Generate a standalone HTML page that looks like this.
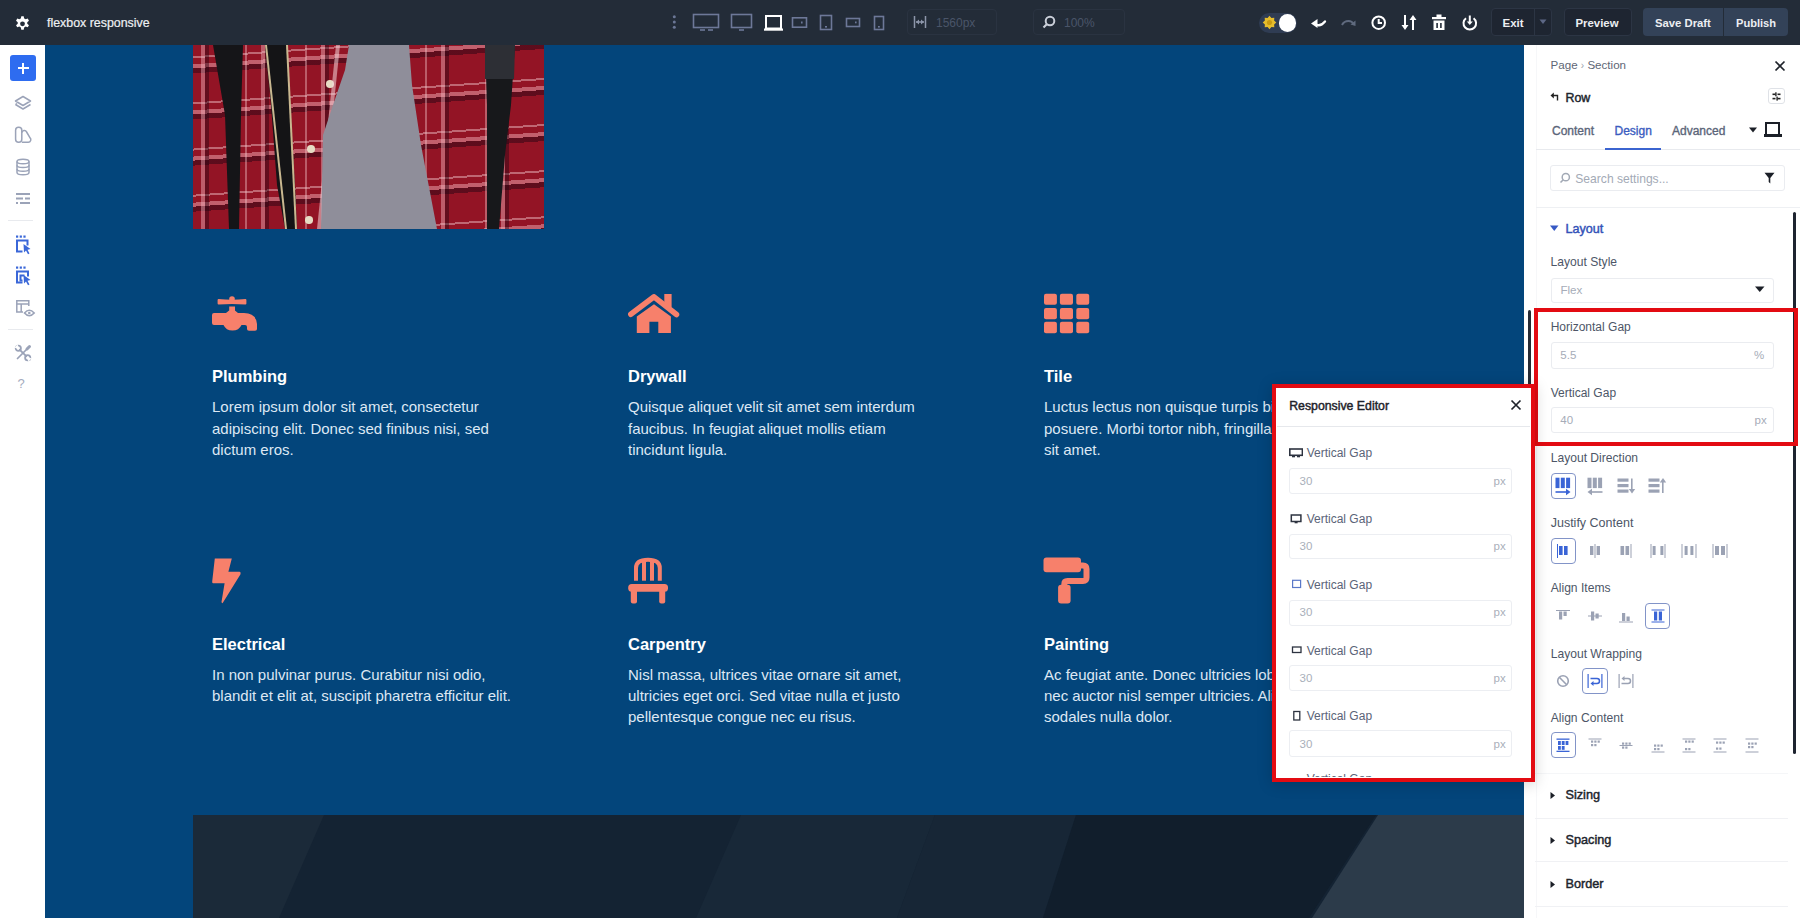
<!DOCTYPE html>
<html><head><meta charset="utf-8">
<style>
*{box-sizing:border-box;margin:0;padding:0}
html,body{width:1800px;height:918px;overflow:hidden;background:#fff}
body{position:relative;font-family:"Liberation Sans",sans-serif}
.a{position:absolute}
#top{left:0;top:0;width:1800px;height:45px;background:#232c38}
#side{left:0;top:45px;width:45px;height:873px;background:#fff}
#canvas{left:45px;top:45px;width:1479px;height:873px;background:#03457b;overflow:hidden}
#panel{left:1524px;top:45px;width:276px;height:873px;background:#fff}
.t{position:absolute;white-space:nowrap;line-height:1}
</style></head>
<body>
<div id="top" class="a">
</div>
<svg class="a" style="left:14px;top:15px" width="17" height="17" viewBox="0 0 24 24"><path fill="#fff" fill-rule="evenodd" d="M10.3 1h3.4l.6 3.1c.8.3 1.5.7 2.1 1.2l3-1 1.7 2.9-2.4 2.1c.1.8.1 1.5 0 2.3l2.4 2.1-1.7 2.9-3-1c-.6.5-1.3.9-2.1 1.2l-.6 3.1h-3.4l-.6-3.1c-.8-.3-1.5-.7-2.1-1.2l-3 1-1.7-2.9 2.4-2.1c-.1-.8-.1-1.5 0-2.3L2.9 7.2l1.7-2.9 3 1c.6-.5 1.3-.9 2.1-1.2zM12 8.3a3.4 3.4 0 1 0 0 6.8 3.4 3.4 0 0 0 0-6.8z" transform="translate(0,.8)"/></svg>
<div class="t" style="left:47px;top:16.6px;font-size:12.4px;color:#eef0f3;-webkit-text-stroke:0.2px #eef0f3">flexbox responsive</div>
<svg class="a" style="left:660px;top:0" width="240" height="45">
 <g fill="#6b7796"><circle cx="14.3" cy="16.8" r="1.5"/><circle cx="14.3" cy="22" r="1.5"/><circle cx="14.3" cy="27.3" r="1.5"/></g>
 <g fill="none" stroke="#6d7898" stroke-width="1.6">
  <rect x="33.5" y="14.5" width="25" height="13"/>
  <line x1="40" y1="30" x2="45" y2="30"/><line x1="48" y1="30" x2="53" y2="30"/>
  <rect x="71.5" y="14.5" width="20" height="13"/>
  <line x1="79" y1="30" x2="84" y2="30"/>
  <rect x="132.5" y="17.8" width="14" height="9.4"/>
  <rect x="160.5" y="15.5" width="11" height="14"/>
  <rect x="186.5" y="18.5" width="13" height="8"/>
  <rect x="214.5" y="16.5" width="9" height="13"/>
 </g>
 <g fill="#6d7898"><rect x="141" y="21.5" width="1.6" height="2"/><rect x="165" y="26" width="2" height="1.6"/><rect x="195" y="21.5" width="1.6" height="1.8"/><rect x="218" y="26" width="1.8" height="1.6"/></g>
 <g fill="none" stroke="#fff" stroke-width="2"><rect x="106" y="16" width="15" height="12.5"/></g>
 <rect x="104" y="28.5" width="19" height="2.2" fill="#fff"/>
</svg>
<div class="a" style="left:907px;top:9px;width:90px;height:26px;border:1px solid #2a3341;border-radius:4px"></div>
<svg class="a" style="left:912px;top:14px" width="16" height="16" viewBox="0 0 16 16"><g stroke="#8d96aa" stroke-width="1.5" fill="none"><line x1="2.5" y1="2" x2="2.5" y2="14"/><line x1="13.5" y1="2" x2="13.5" y2="14"/><line x1="4" y1="8" x2="12" y2="8"/></g><path d="M4 8l3-2.5v5zM12 8l-3-2.5v5z" fill="#8d96aa"/></svg>
<div class="t" style="left:936px;top:17px;font-size:12px;color:#4a5569">1560px</div>
<div class="a" style="left:1033px;top:9px;width:92px;height:26px;border:1px solid #2a3341;border-radius:4px"></div>
<svg class="a" style="left:1041px;top:14px" width="16" height="16" viewBox="0 0 16 16"><circle cx="9" cy="7" r="4.3" stroke="#c9ced8" stroke-width="2" fill="none"/><line x1="6" y1="10" x2="2.5" y2="13.5" stroke="#c9ced8" stroke-width="2.2"/></svg>
<div class="t" style="left:1064px;top:17px;font-size:12px;color:#4a5569">100%</div>
<div class="a" style="left:1259px;top:12.5px;width:38px;height:20px;border-radius:10px;background:#2f3c53"></div>
<svg class="a" style="left:1262.2px;top:15.2px" width="15" height="15" viewBox="0 0 15 15"><polygon points="14.30,7.50 12.12,9.41 12.31,12.31 9.41,12.12 7.50,14.30 5.59,12.12 2.69,12.31 2.88,9.41 0.70,7.50 2.88,5.59 2.69,2.69 5.59,2.88 7.50,0.70 9.41,2.88 12.31,2.69 12.12,5.59" fill="#e6bd2c"/><circle cx="7.5" cy="7.5" r="2.6" fill="#c99a12"/></svg>
<div class="a" style="left:1278.6px;top:14px;width:17.5px;height:17.5px;border-radius:50%;background:#fff"></div>
<svg class="a" style="left:1310px;top:14px" width="17" height="17" viewBox="0 0 17 17"><path d="M6 10.5 Q10.5 13 15 7.5" stroke="#fff" stroke-width="2.3" fill="none" stroke-linecap="round"/><path d="M1 9.5 L7.5 5 L7.5 14 Z" fill="#fff"/></svg>
<svg class="a" style="left:1340px;top:14px" width="17" height="17" viewBox="0 0 17 17"><path d="M2 11 Q4 7 8.5 7 Q12 7 13.5 10" stroke="#5f6a7e" stroke-width="2" fill="none"/><path d="M15.5 12 L15.5 6.5 L10.5 10.5 Z" fill="#5f6a7e"/></svg>
<svg class="a" style="left:1370px;top:14px" width="18" height="18" viewBox="0 0 18 18"><circle cx="8.7" cy="8.7" r="6.3" stroke="#fff" stroke-width="2" fill="none"/><path d="M8.7 5v4h3.3" stroke="#fff" stroke-width="2" fill="none"/></svg>
<svg class="a" style="left:1400px;top:13px" width="18" height="19" viewBox="0 0 18 19"><g stroke="#fff" stroke-width="2" fill="none"><line x1="5" y1="2" x2="5" y2="13"/><line x1="13" y1="6" x2="13" y2="17"/></g><path d="M1.5 12h7l-3.5 5z M9.5 7h7l-3.5-5z" fill="#fff"/></svg>
<svg class="a" style="left:1431px;top:13px" width="16" height="19" viewBox="0 0 16 19"><rect x="1" y="4" width="14" height="2.2" fill="#fff"/><rect x="5.5" y="1.5" width="5" height="2.5" fill="#fff"/><path d="M2.5 7.5h11v9.5h-11z" fill="#fff"/><rect x="5.3" y="10" width="1.6" height="5" fill="#232c38"/><rect x="9.1" y="10" width="1.6" height="5" fill="#232c38"/></svg>
<svg class="a" style="left:1461px;top:14px" width="18" height="18" viewBox="0 0 18 18"><path d="M5 4.2 A6.3 6.3 0 1 0 12.6 4.2" stroke="#fff" stroke-width="2" fill="none"/><line x1="8.8" y1="1.5" x2="8.8" y2="9" stroke="#fff" stroke-width="2"/><path d="M5.8 7.5h6l-3 3.5z" fill="#fff"/></svg>
<div class="a" style="left:1491px;top:8px;width:61px;height:28px;border:1px solid #2c3544;border-radius:4px;background:#1e2531"></div>
<div class="a" style="left:1534px;top:8px;width:1px;height:28px;background:#2c3544"></div>
<svg class="a" style="left:1539px;top:19px" width="8" height="6"><path d="M0.5 0.5h7l-3.5 4.5z" fill="#5c6785"/></svg>
<div class="t" style="left:1502.5px;top:18px;font-size:11.5px;font-weight:bold;color:#eceef2">Exit</div>
<div class="a" style="left:1564px;top:8px;width:68px;height:28px;border:1px solid #2c3544;border-radius:4px;background:#1e2531"></div>
<div class="t" style="left:1575.5px;top:18px;font-size:11.4px;font-weight:bold;color:#eceef2">Preview</div>
<div class="a" style="left:1643px;top:8px;width:80px;height:28px;border-radius:4px 0 0 4px;background:#334258"></div>
<div class="a" style="left:1724px;top:8px;width:64px;height:28px;border-radius:0 4px 4px 0;background:#334258"></div>
<div class="t" style="left:1655px;top:18px;font-size:11.3px;font-weight:bold;color:#eceef2">Save Draft</div>
<div class="t" style="left:1736px;top:18px;font-size:11.1px;font-weight:bold;color:#eceef2">Publish</div>

<div id="side" class="a">
</div>
<div class="a" style="left:10px;top:55px;width:26px;height:26px;border-radius:3px;background:#2e6cf0"></div>
<div class="a" style="left:17.5px;top:67px;width:11px;height:2px;background:#fff"></div>
<div class="a" style="left:22px;top:62.5px;width:2px;height:11px;background:#fff"></div>
<svg class="a" style="left:13px;top:94px" width="20" height="20" viewBox="0 0 20 20"><g fill="none" stroke="#9ba3b8" stroke-width="1.5" stroke-linejoin="round"><path d="M10 2.5 L17.5 7 L10 11.5 L2.5 7 Z"/><path d="M2.5 10.5 L10 15 L17.5 10.5"/><path d="M4 9.5 L2.5 10.5"/></g></svg>
<svg class="a" style="left:13px;top:125px" width="20" height="20" viewBox="0 0 20 20"><g fill="none" stroke="#9ba3b8" stroke-width="1.5" stroke-linejoin="round"><rect x="2.6" y="2.2" width="6.2" height="15" rx="3"/><path d="M8.8 17.2 H15.2 A2.6 2.6 0 0 0 16.9 12.6 L13.6 7 A2.5 2.5 0 0 0 8.8 7.8"/></g></svg>
<svg class="a" style="left:13px;top:157px" width="20" height="20" viewBox="0 0 20 20"><g fill="none" stroke="#9ba3b8" stroke-width="1.5"><ellipse cx="10" cy="4.5" rx="6" ry="2.3"/><path d="M4 4.5 V15.5 C4 17 7 17.8 10 17.8 C13 17.8 16 17 16 15.5 V4.5"/><path d="M4 8.3 C4 9.8 7 10.6 10 10.6 C13 10.6 16 9.8 16 8.3"/><path d="M4 12 C4 13.5 7 14.3 10 14.3 C13 14.3 16 13.5 16 12"/></g></svg>
<svg class="a" style="left:13px;top:189px" width="20" height="20" viewBox="0 0 20 20"><g fill="#9ba3b8"><rect x="3" y="4" width="14" height="2"/><rect x="3" y="8.5" width="7" height="2"/><rect x="12" y="8.5" width="5" height="2"/><rect x="3" y="13" width="2" height="2"/><rect x="7" y="13" width="10" height="2"/></g></svg>
<div class="a" style="left:8px;top:219.5px;width:25px;height:1px;background:#e8eaee"></div>
<svg class="a" style="left:13px;top:234px" width="20" height="21" viewBox="0 0 20 21"><g fill="#3a67d8"><rect x="3" y="1.5" width="2.2" height="2.2"/><rect x="6.7" y="1.5" width="2.2" height="2.2"/><rect x="10.4" y="1.5" width="2.2" height="2.2"/><path d="M3 5.5h12.5v6h-2v-4H5v9h4.5v2H3z"/><path d="M10.5 10 L17.5 15 L14.5 15.8 L16.5 19.5 L15 20.2 L13 16.6 L11 18.5 Z"/></g></svg>
<svg class="a" style="left:13px;top:265px" width="20" height="21" viewBox="0 0 20 21"><g fill="#3a67d8"><rect x="3" y="1.5" width="2.2" height="2.2"/><rect x="6.7" y="1.5" width="2.2" height="2.2"/><rect x="10.4" y="1.5" width="2.2" height="2.2"/><path d="M3 5.5h13v6h-2v-4H5v9h4.5v2H3z"/><path d="M6.5 9.5h5v2h-3v3h1v2h-3z"/><path d="M10.5 10 L17.5 15 L14.5 15.8 L16.5 19.5 L15 20.2 L13 16.6 L11 18.5 Z"/></g></svg>
<svg class="a" style="left:13px;top:297px" width="24" height="20" viewBox="0 0 24 20"><g fill="none" stroke="#9ba3b8" stroke-width="1.5"><path d="M10 15 H3.8 V3.7 H15.8 V9"/><line x1="3.8" y1="7" x2="15.8" y2="7"/><line x1="8.2" y1="7" x2="8.2" y2="15"/><path d="M11.5 16 Q16.3 10.5 21.2 16 Q16.3 21.5 11.5 16Z" stroke-width="1.6"/></g><circle cx="16.3" cy="16" r="1.3" fill="#9ba3b8"/></svg>
<div class="a" style="left:8px;top:329px;width:25px;height:1px;background:#e8eaee"></div>
<svg class="a" style="left:13px;top:343px" width="20" height="20" viewBox="0 0 20 20"><g fill="none" stroke="#9ba3b8" stroke-linecap="round"><path d="M14.5 5.5 L4.5 15.5" stroke-width="1.7"/><path d="M16.5 3.5 L14 6" stroke-width="3"/><path d="M6.8 6.8 L13.2 13.2" stroke-width="1.9"/><circle cx="5.3" cy="5.3" r="2.6" stroke-width="1.8"/><circle cx="14.7" cy="14.7" r="2.6" stroke-width="1.8"/></g><path d="M1.5 4.5 L4.5 1.5 L6 5 L5 6Z M18.5 15.5 L15.5 18.5 L14 15 L15 14Z" fill="#fff"/></svg>
<div class="t" style="left:17.5px;top:377px;font-size:13px;color:#a3abbe">?</div>

<div id="canvas" class="a">
</div>
<div class="a" style="left:193px;top:45px;width:351px;height:184px;overflow:hidden;background:#931425">
 <div class="a" style="left:-20px;top:-20px;width:400px;height:230px;transform:rotate(-4deg);background:
  repeating-linear-gradient(0deg, transparent 0 10px, rgba(40,5,20,.5) 10px 15px, rgba(240,170,180,.5) 15px 19px, transparent 19px 25px, rgba(245,205,210,.45) 25px 27px, transparent 27px 46px)"></div>
 <div class="a" style="left:0;top:0;width:351px;height:184px;background:
  repeating-linear-gradient(90deg, transparent 0 8px, rgba(240,180,190,.45) 8px 12px, rgba(40,5,20,.45) 12px 16px, transparent 16px 52px, rgba(245,200,205,.4) 52px 54px, transparent 54px 60px)"></div>
 <div class="a" style="left:133px;top:35px;width:7.5px;height:7.5px;border-radius:50%;background:#e6dcc4"></div>
 <div class="a" style="left:114px;top:100px;width:7.5px;height:7.5px;border-radius:50%;background:#e6dcc4"></div>
 <div class="a" style="left:112px;top:171px;width:7.5px;height:7.5px;border-radius:50%;background:#e6dcc4"></div>
 <div class="a" style="left:0;top:0;width:351px;height:184px;background:rgba(245,215,220,.55);clip-path:polygon(143px 0,147px 0,128px 184px,124px 184px)"></div>
 <div class="a" style="left:0;top:0;width:351px;height:184px;background:#8f8e9a;clip-path:polygon(156px 0,216px 0,219px 40px,228px 100px,244px 184px,128px 184px,130px 90px,140px 60px,152px 25px)"></div>
 <div class="a" style="left:0;top:0;width:351px;height:184px;background:#151518;clip-path:polygon(20px 0,50px 0,48px 70px,46px 184px,36px 184px,32px 70px)"></div>
 <div class="a" style="left:0;top:0;width:351px;height:184px;background:#141416;clip-path:polygon(72px 0,94px 0,97px 60px,102px 140px,104px 184px,92px 184px,84px 140px,78px 60px)"></div>
 <div class="a" style="left:0;top:0;width:351px;height:184px;background:#c9b890;clip-path:polygon(72px 0,74px 0,94px 184px,92px 184px)"></div>
 <div class="a" style="left:0;top:0;width:351px;height:184px;background:#c9b890;clip-path:polygon(93px 0,95px 0,104px 184px,102px 184px)"></div>
 <div class="a" style="left:0;top:0;width:351px;height:184px;background:#17181b;clip-path:polygon(292px 0,322px 0,318px 60px,312px 110px,306px 184px,294px 184px,294px 60px)"></div>
 <div class="a" style="left:0;top:0;width:351px;height:184px;background:#2d2f35;clip-path:polygon(292px 0,322px 0,321px 34px,292px 34px)"></div>
</div>
<svg class="a" style="left:212px;top:296px" width="46" height="36" viewBox="0 0 46 36" fill="#f7806b">
 <path d="M5.6 4 Q5.6 3 6.6 3 Q20 4.6 33.4 3 Q34.4 3 34.4 4 L34.4 7.6 Q34.4 8.6 33.4 8.6 Q20 7.2 6.6 8.6 Q5.6 8.6 5.6 7.6 Z"/>
 <circle cx="20" cy="3" r="2.8"/>
 <rect x="17.2" y="10.5" width="5.8" height="6"/>
 <path d="M0 19 Q0 17 2 17 L14 17 Q16.5 14 20 14 Q23.5 14 26 17 L32 17 Q44 17 45 28 L45 33 Q45 34.8 43 34.8 L37 34.8 Q35 34.8 35 33 L35 31 Q35 29 33 29 L29.5 29 Q27 34.5 20.5 34.5 Q14 34.5 11.5 29 L2 29 Q0 29 0 27 Z"/>
</svg>
<svg class="a" style="left:628px;top:294px" width="52" height="40" viewBox="0 0 52 40" fill="#f7806b">
 <rect x="36.3" y="0" width="7.3" height="13"/>
 <path d="M2.8 20.3 L26 2.8 L48.5 20.5" fill="none" stroke="#f7806b" stroke-width="5.5" stroke-linecap="round" stroke-linejoin="round"/>
 <path d="M8.8 22.6 L26 10.2 L42.9 22.6 V39 H30.3 V27.8 H21.4 V39 H8.8 Z"/>
</svg>
<svg class="a" style="left:1043px;top:293px" width="48" height="42" viewBox="0 0 48 42" fill="#f7806b">
 <rect x="1" y="0.7" width="12.9" height="11.1" rx="2"/><rect x="16.9" y="0.7" width="13.1" height="11.1" rx="2"/><rect x="33.3" y="0.7" width="12.9" height="11.1" rx="2"/>
 <rect x="1" y="15" width="12.9" height="11.2" rx="2"/><rect x="16.9" y="15" width="13.1" height="11.2" rx="2"/><rect x="33.3" y="15" width="12.9" height="11.2" rx="2"/>
 <rect x="1" y="28.8" width="12.9" height="11.4" rx="2"/><rect x="16.9" y="28.8" width="13.1" height="11.4" rx="2"/><rect x="33.3" y="28.8" width="12.9" height="11.4" rx="2"/>
</svg>
<svg class="a" style="left:211px;top:558px" width="32" height="48" viewBox="0 0 32 48" fill="#f7806b">
 <path d="M3.8 0.5 H20.8 L17.4 13.8 H28.6 Q30.2 14 29.5 16.2 L12 44.5 Q11 46 10.5 44 L13.6 25.3 H2 Q1 25 1.2 23.5 Z"/>
</svg>
<svg class="a" style="left:628px;top:557px" width="42" height="48" viewBox="0 0 42 48" fill="#f7806b">
 <path d="M8 23.7 V11 Q8 2.8 20 2.8 Q31.8 2.8 31.8 11 V23.7" fill="none" stroke="#f7806b" stroke-width="4"/>
 <rect x="14" y="5" width="4" height="18.7"/><rect x="22" y="5" width="4" height="18.7"/>
 <rect x="0.2" y="27" width="39.8" height="7.8" rx="3.5"/>
 <rect x="2.8" y="32" width="6.2" height="14.6" rx="2"/><rect x="31.2" y="32" width="6" height="14.6" rx="2"/>
</svg>
<svg class="a" style="left:1043px;top:557px" width="48" height="48" viewBox="0 0 48 48" fill="#f7806b">
 <rect x="0.5" y="0.4" width="37.5" height="14.9" rx="3"/>
 <path d="M37 8.5 H40 Q43.5 8.5 43.5 12 V20.5 Q43.5 24 40 24 H24.5 Q21.3 24 21.3 27.2 V30" fill="none" stroke="#f7806b" stroke-width="6"/>
 <rect x="15.1" y="27.7" width="12.5" height="18.9" rx="3"/>
</svg>
<div class="t" style="left:212px;top:368.2px;font-size:16.5px;font-weight:bold;color:#fff">Plumbing</div>
<div class="t" style="left:212px;top:396.2px;font-size:15px;line-height:21.4px;color:#dde8f4">Lorem ipsum dolor sit amet, consectetur<br>adipiscing elit. Donec sed finibus nisi, sed<br>dictum eros.</div>
<div class="t" style="left:628px;top:368.2px;font-size:16.5px;font-weight:bold;color:#fff">Drywall</div>
<div class="t" style="left:628px;top:396.2px;font-size:15px;line-height:21.4px;color:#dde8f4">Quisque aliquet velit sit amet sem interdum<br>faucibus. In feugiat aliquet mollis etiam<br>tincidunt ligula.</div>
<div class="t" style="left:1044px;top:368.2px;font-size:16.5px;font-weight:bold;color:#fff">Tile</div>
<div class="t" style="left:1044px;top:396.2px;font-size:15px;line-height:21.4px;color:#dde8f4">Luctus lectus non quisque turpis bibendum<br>posuere. Morbi tortor nibh, fringilla<br>sit amet.</div>
<div class="t" style="left:212px;top:636.0px;font-size:16.5px;font-weight:bold;color:#fff">Electrical</div>
<div class="t" style="left:212px;top:663.5px;font-size:15px;line-height:21.4px;color:#dde8f4">In non pulvinar purus. Curabitur nisi odio,<br>blandit et elit at, suscipit pharetra efficitur elit.</div>
<div class="t" style="left:628px;top:636.0px;font-size:16.5px;font-weight:bold;color:#fff">Carpentry</div>
<div class="t" style="left:628px;top:663.5px;font-size:15px;line-height:21.4px;color:#dde8f4">Nisl massa, ultrices vitae ornare sit amet,<br>ultricies eget orci. Sed vitae nulla et justo<br>pellentesque congue nec eu risus.</div>
<div class="t" style="left:1044px;top:636.0px;font-size:16.5px;font-weight:bold;color:#fff">Painting</div>
<div class="t" style="left:1044px;top:663.5px;font-size:15px;line-height:21.4px;color:#dde8f4">Ac feugiat ante. Donec ultricies lobortis<br>nec auctor nisl semper ultricies. Aliquam<br>sodales nulla dolor.</div>
<div class="a" style="left:193px;top:815px;width:1331px;height:103px;overflow:hidden;background:#142333">
 <div class="a" style="left:0;top:0;width:1331px;height:103px;background:#1b2a39;clip-path:polygon(0 0,131px 0,86px 103px,0 103px)"></div>
 <div class="a" style="left:0;top:0;width:1331px;height:103px;background:#182838;clip-path:polygon(548px 0,742px 0,704px 103px,503px 103px)"></div>
 <div class="a" style="left:0;top:0;width:1331px;height:103px;background:#172636;clip-path:polygon(742px 0,883px 0,850px 103px,704px 103px)"></div>
 <div class="a" style="left:0;top:0;width:1331px;height:103px;background:#111e2c;clip-path:polygon(883px 0,1183px 0,1116px 103px,850px 103px)"></div>
 <div class="a" style="left:0;top:0;width:1331px;height:103px;background:#2c3b4a;clip-path:polygon(1185px 0,1331px 0,1331px 103px,1119px 103px)"></div>
</div>

<div id="panel" class="a">
</div><div class="a" style="left:1536px;top:45px;width:1px;height:873px;background:#f6f7f9"></div>
<div class="t" style="left:1550.5px;top:59.1px;font-size:11.6px;color:#5e6675;font-weight:normal">Page <span style="color:#9aa0ab;font-size:10px">&#8250;</span> Section</div>
<svg class="a" style="left:1774px;top:60px" width="12" height="12" viewBox="0 0 12 12"><path d="M1.5 1.5l9 9M10.5 1.5l-9 9" stroke="#1f232b" stroke-width="1.7"/></svg>
<svg class="a" style="left:1550px;top:91px" width="10" height="10" viewBox="0 0 10 10"><path d="M3 4.5 H7.5 V9.5" fill="none" stroke="#222" stroke-width="1.4"/><path d="M0.5 4.5 L3.8 1.5 V7.5 Z" fill="#222"/></svg>
<div class="t" style="left:1565.5px;top:91.8px;font-size:12.4px;color:#20242c;font-weight:normal;-webkit-text-stroke:0.45px #20242c">Row</div>
<div class="a" style="left:1768px;top:88px;width:16.5px;height:16px;border:1px solid #dfe2e7;border-radius:3px"></div>
<svg class="a" style="left:1771px;top:91px" width="11" height="11" viewBox="0 0 11 11"><g fill="#222"><rect x="1.5" y="2.5" width="3" height="1.6"/><rect x="6.5" y="2.5" width="3" height="1.6"/><rect x="4.2" y="1.3" width="1.4" height="4"/><rect x="1.5" y="6.8" width="3" height="1.6"/><rect x="6.5" y="6.8" width="3" height="1.6"/><rect x="5.4" y="5.6" width="1.4" height="4"/></g></svg>
<div class="t" style="left:1552px;top:125.4px;font-size:12px;color:#5b6579;font-weight:normal;-webkit-text-stroke:0.35px #5b6579">Content</div>
<div class="t" style="left:1614.5px;top:125.4px;font-size:12px;color:#3b5cc0;font-weight:normal;-webkit-text-stroke:0.35px #3b5cc0">Design</div>
<div class="t" style="left:1672px;top:125.4px;font-size:12px;color:#5b6579;font-weight:normal;-webkit-text-stroke:0.35px #5b6579">Advanced</div>
<svg class="a" style="left:1749px;top:127px" width="9" height="6"><path d="M0 0.5h8l-4 5z" fill="#1b1f27"/></svg>
<div class="a" style="left:1765px;top:122px;width:15px;height:13px;border:2px solid #1b1f27;border-bottom:none"></div><div class="a" style="left:1763.5px;top:134px;width:18px;height:2.5px;background:#1b1f27"></div>
<div class="a" style="left:1536px;top:148.5px;width:264px;height:1px;background:#e8eaee"></div>
<div class="a" style="left:1605px;top:147.5px;width:56px;height:2.5px;background:#3b64d0"></div>
<div class="a" style="left:1550px;top:165px;width:235px;height:26px;border:1px solid #eaecf0;border-radius:3px;background:#fff"></div>
<svg class="a" style="left:1559px;top:172px" width="12" height="12" viewBox="0 0 12 12"><circle cx="6.8" cy="5.2" r="3.6" stroke="#a2a9b5" stroke-width="1.5" fill="none"/><path d="M4.3 7.7 L1.5 10.5" stroke="#a2a9b5" stroke-width="1.6"/></svg>
<div class="t" style="left:1575.3px;top:172.9px;font-size:12.1px;color:#a3aab6;font-weight:normal">Search settings...</div>
<svg class="a" style="left:1764px;top:172px" width="11" height="12" viewBox="0 0 11 12"><path d="M0.5 0.8 H10.5 L6.3 6 V11.5 L4.7 10 V6 Z" fill="#1b1f27"/></svg>
<div class="a" style="left:1536px;top:207px;width:264px;height:1px;background:#eef0f3"></div>
<div class="a" style="left:1793px;top:212px;width:3px;height:542px;border-radius:2px;background:#1e2430"></div>
<svg class="a" style="left:1550px;top:225px" width="9" height="7"><path d="M0 0.5h8.5l-4.25 5.5z" fill="#3659c4"/></svg>
<div class="t" style="left:1565.5px;top:222.7px;font-size:12.6px;color:#3352b8;font-weight:normal;-webkit-text-stroke:0.45px #3352b8">Layout</div>
<div class="t" style="left:1550.5px;top:256.4px;font-size:12.1px;color:#4d5667;font-weight:normal">Layout Style</div>
<div class="a" style="left:1550.5px;top:277.5px;width:223.0px;height:25.0px;border:1px solid #eaecf0;border-radius:3px;background:#fff"></div>
<div class="t" style="left:1560.4px;top:284.1px;font-size:11.6px;color:#a6acb8;font-weight:normal">Flex</div>
<svg class="a" style="left:1755px;top:286px" width="10" height="7"><path d="M0 0.5h9.5l-4.75 5.5z" fill="#1b1f27"/></svg>
<div class="t" style="left:1550.7px;top:320.8px;font-size:12px;color:#4d5667;font-weight:normal">Horizontal Gap</div>
<div class="a" style="left:1550.7px;top:342px;width:223.0px;height:26.5px;border:1px solid #eaecf0;border-radius:3px;background:#fff"></div>
<div class="t" style="left:1560.3px;top:349.7px;font-size:11.5px;color:#a6acb8;font-weight:normal">5.5</div>
<div class="t" style="left:1754px;top:349.7px;font-size:11.5px;color:#a6acb8;font-weight:normal">%</div>
<div class="t" style="left:1550.7px;top:386.7px;font-size:12px;color:#4d5667;font-weight:normal">Vertical Gap</div>
<div class="a" style="left:1550.7px;top:407.3px;width:223.0px;height:26.0px;border:1px solid #eaecf0;border-radius:3px;background:#fff"></div>
<div class="t" style="left:1560.3px;top:415.2px;font-size:11.5px;color:#a6acb8;font-weight:normal">40</div>
<div class="t" style="left:1754.5px;top:415.2px;font-size:11.5px;color:#a6acb8;font-weight:normal">px</div>
<div class="t" style="left:1550.7px;top:452.4px;font-size:12.1px;color:#4d5667;font-weight:normal">Layout Direction</div>
<div class="t" style="left:1550.7px;top:517.2px;font-size:12.5px;color:#4d5667;font-weight:normal">Justify Content</div>
<div class="t" style="left:1550.7px;top:582.4px;font-size:12.1px;color:#4d5667;font-weight:normal">Align Items</div>
<div class="t" style="left:1550.7px;top:647.8px;font-size:12.1px;color:#4d5667;font-weight:normal">Layout Wrapping</div>
<div class="t" style="left:1550.7px;top:712.0px;font-size:12.1px;color:#4d5667;font-weight:normal">Align Content</div>
<div class="a" style="left:1535px;top:773px;width:253px;height:1px;background:#f5f6f8"></div>
<svg class="a" style="left:1550px;top:790.5px" width="6" height="9"><path d="M0.5 1 L5 4.5 L0.5 8 Z" fill="#1b1f27"/></svg>
<div class="t" style="left:1565.5px;top:789.4px;font-size:12.7px;color:#20242c;font-weight:normal;-webkit-text-stroke:0.45px #20242c">Sizing</div>
<div class="a" style="left:1535px;top:818px;width:253px;height:1px;background:#f0f1f4"></div>
<svg class="a" style="left:1550px;top:835.5px" width="6" height="9"><path d="M0.5 1 L5 4.5 L0.5 8 Z" fill="#1b1f27"/></svg>
<div class="t" style="left:1565.5px;top:834.4px;font-size:12.7px;color:#20242c;font-weight:normal;-webkit-text-stroke:0.45px #20242c">Spacing</div>
<div class="a" style="left:1535px;top:861px;width:253px;height:1px;background:#f0f1f4"></div>
<svg class="a" style="left:1550px;top:879.5px" width="6" height="9"><path d="M0.5 1 L5 4.5 L0.5 8 Z" fill="#1b1f27"/></svg>
<div class="t" style="left:1565.5px;top:878.4px;font-size:12.7px;color:#20242c;font-weight:normal;-webkit-text-stroke:0.45px #20242c">Border</div>
<div class="a" style="left:1535px;top:906px;width:253px;height:1px;background:#f0f1f4"></div>

<div class="a" style="left:1550.5px;top:473.2px;width:25.5px;height:25.5px;border:1px solid #8294c8;border-radius:4px"></div>
<svg class="a" style="left:1554.3px;top:476.5px" width="18" height="19" viewBox="0 0 18 19"><g fill="#3a64d6"><rect x="1.5" y="0.7" width="4" height="10.4"/><rect x="6.8" y="0.7" width="4" height="10.4"/><rect x="12.1" y="0.7" width="4" height="10.4"/><rect x="1.5" y="14.2" width="11" height="1.6"/><path d="M12 11.8 L16.5 15 L12 18.2Z"/></g></svg>
<svg class="a" style="left:1585.7px;top:476.5px" width="18" height="19" viewBox="0 0 18 19"><g fill="#9ba2b4"><rect x="1.5" y="0.7" width="4" height="10.4"/><rect x="6.8" y="0.7" width="4" height="10.4"/><rect x="12.1" y="0.7" width="4" height="10.4"/><rect x="5.5" y="14.2" width="11" height="1.6"/><path d="M6 11.8 L1.5 15 L6 18.2Z"/></g></svg>
<svg class="a" style="left:1616.6px;top:477.5px" width="19" height="17" viewBox="0 0 19 17"><g fill="#9ba2b4"><rect x="0.5" y="0.5" width="11" height="3.2"/><rect x="0.5" y="6" width="11" height="3.2"/><rect x="0.5" y="11.5" width="11" height="3.2"/><rect x="14" y="0.5" width="1.6" height="11"/><path d="M11.8 11 L15 15.5 L18.2 11Z"/></g></svg>
<svg class="a" style="left:1648.0px;top:477.5px" width="19" height="17" viewBox="0 0 19 17"><g fill="#9ba2b4"><rect x="0.5" y="0.5" width="11" height="3.2"/><rect x="0.5" y="6" width="11" height="3.2"/><rect x="0.5" y="11.5" width="11" height="3.2"/><rect x="14" y="4" width="1.6" height="11"/><path d="M11.8 4.5 L15 0 L18.2 4.5Z"/></g></svg>
<div class="a" style="left:1550.5px;top:538.2px;width:25.5px;height:25.5px;border:1px solid #8294c8;border-radius:4px"></div>
<svg class="a" style="left:1556.3px;top:544.0px" width="14" height="14" viewBox="0 0 14 14"><g fill="#3a64d6"><rect x="1" y="0" width="1" height="14"/><rect x="3" y="2" width="3.6" height="9"/><rect x="8" y="2" width="3.6" height="9"/></g></svg>
<svg class="a" style="left:1587.7px;top:544.0px" width="14" height="14" viewBox="0 0 14 14"><g fill="#9ba2b4"><rect x="2" y="2" width="3.4" height="9"/><rect x="8.6" y="2" width="3.4" height="9"/><rect x="6.5" y="0" width="1" height="14"/></g></svg>
<svg class="a" style="left:1619.1px;top:544.0px" width="14" height="14" viewBox="0 0 14 14"><g fill="#9ba2b4"><rect x="1.5" y="2" width="3.6" height="9"/><rect x="6.5" y="2" width="3.6" height="9"/><rect x="11.5" y="0" width="1" height="14"/></g></svg>
<svg class="a" style="left:1649.5px;top:544.0px" width="16" height="14" viewBox="0 0 16 14"><g fill="#9ba2b4"><rect x="0.5" y="0" width="1" height="14"/><rect x="2.6" y="2" width="3" height="9"/><rect x="10.4" y="2" width="3" height="9"/><rect x="14.5" y="0" width="1" height="14"/></g></svg>
<svg class="a" style="left:1680.9px;top:544.0px" width="16" height="14" viewBox="0 0 16 14"><g fill="#9ba2b4"><rect x="0.5" y="0" width="1" height="14"/><rect x="3.6" y="2" width="3" height="9"/><rect x="9.4" y="2" width="3" height="9"/><rect x="14.5" y="0" width="1" height="14"/></g></svg>
<svg class="a" style="left:1712.3px;top:544.0px" width="16" height="14" viewBox="0 0 16 14"><g fill="#9ba2b4"><rect x="0.5" y="0" width="1" height="14"/><rect x="3" y="2" width="4" height="9"/><rect x="9" y="2" width="4" height="9"/><rect x="14.5" y="0" width="1" height="14"/></g></svg>
<div class="a" style="left:1644.8px;top:603.0px;width:25.5px;height:25.5px;border:1px solid #8294c8;border-radius:4px"></div>
<svg class="a" style="left:1556.3px;top:608.7px" width="14" height="14" viewBox="0 0 14 14"><g fill="#9ba2b4"><rect x="0" y="1" width="14" height="1"/><rect x="3" y="2.5" width="3.2" height="8"/><rect x="7.5" y="2.5" width="3.2" height="4.5"/></g></svg>
<svg class="a" style="left:1587.7px;top:608.7px" width="14" height="14" viewBox="0 0 14 14"><g fill="#9ba2b4"><rect x="0" y="6.5" width="14" height="1"/><rect x="3" y="2.5" width="3.2" height="9"/><rect x="7.5" y="4.5" width="3.2" height="5"/></g></svg>
<svg class="a" style="left:1619.1px;top:608.7px" width="14" height="14" viewBox="0 0 14 14"><g fill="#9ba2b4"><rect x="0" y="12.5" width="14" height="1"/><rect x="3" y="4" width="3.2" height="8"/><rect x="7.5" y="7.5" width="3.2" height="4.5"/></g></svg>
<svg class="a" style="left:1650.5px;top:608.7px" width="14" height="14" viewBox="0 0 14 14"><g fill="#3a64d6"><rect x="0.5" y="0.5" width="13" height="1"/><rect x="0.5" y="12.5" width="13" height="1"/><rect x="3" y="2.5" width="3.2" height="9"/><rect x="7.8" y="2.5" width="3.2" height="9"/></g></svg>
<div class="a" style="left:1582.0px;top:668.2px;width:25.5px;height:25.5px;border:1px solid #8294c8;border-radius:4px"></div>
<svg class="a" style="left:1556.3px;top:674.0px" width="14" height="14" viewBox="0 0 14 14"><g fill="none" stroke="#9ba2b4" stroke-width="1.6"><circle cx="7" cy="7" r="5.3"/><line x1="3.3" y1="3.3" x2="10.7" y2="10.7"/></g></svg>
<svg class="a" style="left:1586.7px;top:674.0px" width="16" height="14" viewBox="0 0 16 14"><g fill="#3a64d6"><rect x="0.5" y="0" width="1.2" height="14"/><rect x="14.3" y="0" width="1.2" height="14"/></g><path d="M3.5 4.5 H10 Q12.5 4.5 12.5 7 Q12.5 9.5 10 9.5 H6" fill="none" stroke="#3a64d6" stroke-width="1.5"/><path d="M6.5 7 L3.5 9.5 L6.5 12Z" fill="#3a64d6"/></svg>
<svg class="a" style="left:1618.1px;top:674.0px" width="16" height="14" viewBox="0 0 16 14"><g fill="#9ba2b4"><rect x="0.5" y="0" width="1.2" height="14"/><rect x="14.3" y="0" width="1.2" height="14"/></g><path d="M3.5 9.5 H10 Q12.5 9.5 12.5 7 Q12.5 4.5 10 4.5 H6" fill="none" stroke="#9ba2b4" stroke-width="1.5"/><path d="M6.5 2 L3.5 4.5 L6.5 7Z" fill="#9ba2b4"/></svg>
<div class="a" style="left:1550.5px;top:732.2px;width:25.5px;height:25.5px;border:1px solid #8294c8;border-radius:4px"></div>
<svg class="a" style="left:1556.3px;top:737.5px" width="14" height="15" viewBox="0 0 14 15"><g fill="#3a64d6"><rect x="0.5" y="0.5" width="13" height="1.3"/><rect x="2" y="3" width="2.8" height="4"/><rect x="5.8" y="3" width="2.8" height="4"/><rect x="9.6" y="3" width="2.8" height="4"/><rect x="2" y="8" width="2.8" height="3.8"/><rect x="5.8" y="8" width="2.8" height="3.8"/><rect x="0.5" y="12.7" width="13" height="1.3"/></g></svg>
<svg class="a" style="left:1587.7px;top:737.5px" width="14" height="15" viewBox="0 0 14 15"><g fill="#9ba2b4"><rect x="3.0" y="2.5" width="2.2" height="2.2"/><rect x="6.3" y="2.5" width="2.2" height="2.2"/><rect x="9.6" y="2.5" width="2.2" height="2.2"/><rect x="3.0" y="6" width="2.2" height="2.2"/><rect x="6.3" y="6" width="2.2" height="2.2"/><rect x="0.5" y="0.5" width="13" height="1"/></g></svg>
<svg class="a" style="left:1619.1px;top:737.5px" width="14" height="15" viewBox="0 0 14 15"><g fill="#9ba2b4"><rect x="3.0" y="4.5" width="2.2" height="2.2"/><rect x="6.3" y="4.5" width="2.2" height="2.2"/><rect x="9.6" y="4.5" width="2.2" height="2.2"/><rect x="3.0" y="8.5" width="2.2" height="2.2"/><rect x="6.3" y="8.5" width="2.2" height="2.2"/><rect x="0.5" y="7" width="13" height="1"/></g></svg>
<svg class="a" style="left:1650.5px;top:737.5px" width="14" height="15" viewBox="0 0 14 15"><g fill="#9ba2b4"><rect x="3.0" y="6.5" width="2.2" height="2.2"/><rect x="6.3" y="6.5" width="2.2" height="2.2"/><rect x="9.6" y="6.5" width="2.2" height="2.2"/><rect x="3.0" y="10" width="2.2" height="2.2"/><rect x="6.3" y="10" width="2.2" height="2.2"/><rect x="0.5" y="13.5" width="13" height="1"/></g></svg>
<svg class="a" style="left:1681.9px;top:737.5px" width="14" height="15" viewBox="0 0 14 15"><g fill="#9ba2b4"><rect x="3.0" y="2.5" width="2.2" height="2.2"/><rect x="6.3" y="2.5" width="2.2" height="2.2"/><rect x="9.6" y="2.5" width="2.2" height="2.2"/><rect x="3.0" y="10" width="2.2" height="2.2"/><rect x="6.3" y="10" width="2.2" height="2.2"/><rect x="0.5" y="0.5" width="13" height="1"/><rect x="0.5" y="13.5" width="13" height="1"/></g></svg>
<svg class="a" style="left:1713.3px;top:737.5px" width="14" height="15" viewBox="0 0 14 15"><g fill="#9ba2b4"><rect x="3.0" y="3.5" width="2.2" height="2.2"/><rect x="6.3" y="3.5" width="2.2" height="2.2"/><rect x="9.6" y="3.5" width="2.2" height="2.2"/><rect x="3.0" y="9.5" width="2.2" height="2.2"/><rect x="6.3" y="9.5" width="2.2" height="2.2"/><rect x="0.5" y="0.5" width="13" height="1"/><rect x="0.5" y="13.5" width="13" height="1"/></g></svg>
<svg class="a" style="left:1744.7px;top:737.5px" width="14" height="15" viewBox="0 0 14 15"><g fill="#9ba2b4"><rect x="3.0" y="4.5" width="2.2" height="2.2"/><rect x="6.3" y="4.5" width="2.2" height="2.2"/><rect x="9.6" y="4.5" width="2.2" height="2.2"/><rect x="3.0" y="8" width="2.2" height="2.2"/><rect x="6.3" y="8" width="2.2" height="2.2"/><rect x="0.5" y="0.5" width="13" height="1"/><rect x="0.5" y="13.5" width="13" height="1"/></g></svg>
<div class="a" style="left:1528px;top:310px;width:3px;height:90px;border-radius:2px;background:#262b35"></div>
<div class="a" style="left:1534px;top:308px;width:264px;height:138px;border:4.3px solid #e30b12"></div>
<div class="a" style="left:1272px;top:384px;width:263px;height:397.5px;background:#fff;box-shadow:0 2px 14px rgba(0,0,0,.18)"></div>
<div class="t" style="left:1289.2px;top:400.2px;font-size:12.3px;color:#1f232b;font-weight:normal;-webkit-text-stroke:0.45px #1f232b">Responsive Editor</div>
<svg class="a" style="left:1509.5px;top:399px" width="12" height="12" viewBox="0 0 12 12"><path d="M1.5 1.5l9 9M10.5 1.5l-9 9" stroke="#1f232b" stroke-width="1.7"/></svg>
<div class="a" style="left:1277px;top:426px;width:253px;height:1px;background:#e6e8ec"></div>
<svg class="a" style="left:1289px;top:446.6px" width="14" height="12" viewBox="0 0 14 12"><rect x="0.8" y="2" width="12.6" height="6.3" fill="none" stroke="#2d3340" stroke-width="1.6"/><rect x="3" y="8.8" width="3" height="1.5" fill="#2d3340"/><rect x="8" y="8.8" width="3" height="1.5" fill="#2d3340"/></svg>
<div class="t" style="left:1306.7px;top:447.1px;font-size:12px;color:#5b6478;font-weight:normal">Vertical Gap</div>
<div class="a" style="left:1289.3px;top:468.2px;width:222.7px;height:25.6px;border:1px solid #eceef2;border-radius:3px"></div>
<div class="t" style="left:1299.5px;top:475.7px;font-size:11.5px;color:#a9afba;font-weight:normal">30</div>
<div class="t" style="left:1493.5px;top:475.7px;font-size:11.5px;color:#a9afba;font-weight:normal">px</div>
<svg class="a" style="left:1290px;top:512.5px" width="12" height="12" viewBox="0 0 12 12"><rect x="1.3" y="2" width="9.6" height="6.5" fill="none" stroke="#2d3340" stroke-width="1.5"/><rect x="4.6" y="8.8" width="3" height="1.5" fill="#2d3340"/></svg>
<div class="t" style="left:1306.7px;top:513.0px;font-size:12px;color:#5b6478;font-weight:normal">Vertical Gap</div>
<div class="a" style="left:1289.3px;top:533.8px;width:222.7px;height:25.6px;border:1px solid #eceef2;border-radius:3px"></div>
<div class="t" style="left:1299.5px;top:541.3px;font-size:11.5px;color:#a9afba;font-weight:normal">30</div>
<div class="t" style="left:1493.5px;top:541.3px;font-size:11.5px;color:#a9afba;font-weight:normal">px</div>
<svg class="a" style="left:1291px;top:578.2px" width="12" height="12" viewBox="0 0 12 12"><rect x="1.6" y="2.3" width="8" height="7.2" fill="none" stroke="#5a78c8" stroke-width="1.2"/></svg>
<div class="t" style="left:1306.7px;top:578.7px;font-size:12px;color:#5b6478;font-weight:normal">Vertical Gap</div>
<div class="a" style="left:1289.3px;top:599.6px;width:222.7px;height:26.0px;border:1px solid #eceef2;border-radius:3px"></div>
<div class="t" style="left:1299.5px;top:607.3px;font-size:11.5px;color:#a9afba;font-weight:normal">30</div>
<div class="t" style="left:1493.5px;top:607.3px;font-size:11.5px;color:#a9afba;font-weight:normal">px</div>
<svg class="a" style="left:1291px;top:644.1px" width="12" height="12" viewBox="0 0 12 12"><rect x="1.5" y="3" width="8.5" height="5.5" fill="none" stroke="#2d3340" stroke-width="1.3"/></svg>
<div class="t" style="left:1306.7px;top:644.6px;font-size:12px;color:#5b6478;font-weight:normal">Vertical Gap</div>
<div class="a" style="left:1289.3px;top:664.6px;width:222.7px;height:26.6px;border:1px solid #eceef2;border-radius:3px"></div>
<div class="t" style="left:1299.5px;top:672.6px;font-size:11.5px;color:#a9afba;font-weight:normal">30</div>
<div class="t" style="left:1493.5px;top:672.6px;font-size:11.5px;color:#a9afba;font-weight:normal">px</div>
<svg class="a" style="left:1292px;top:709.5px" width="10" height="12" viewBox="0 0 10 12"><rect x="1.8" y="1.5" width="6" height="8.5" fill="none" stroke="#2d3340" stroke-width="1.3"/></svg>
<div class="t" style="left:1306.7px;top:710.0px;font-size:12px;color:#5b6478;font-weight:normal">Vertical Gap</div>
<div class="a" style="left:1289.3px;top:730.4px;width:222.7px;height:26.8px;border:1px solid #eceef2;border-radius:3px"></div>
<div class="t" style="left:1299.5px;top:738.5px;font-size:11.5px;color:#a9afba;font-weight:normal">30</div>
<div class="t" style="left:1493.5px;top:738.5px;font-size:11.5px;color:#a9afba;font-weight:normal">px</div>
<div class="a" style="left:1277px;top:770px;width:253px;height:7px;overflow:hidden"><div class="t" style="left:29.7px;top:3px;font-size:12px;color:#5b6478">Vertical Gap</div></div>
<div class="a" style="left:1272px;top:384px;width:263px;height:397.5px;border:4.5px solid #e30b12"></div>
</body></html>
